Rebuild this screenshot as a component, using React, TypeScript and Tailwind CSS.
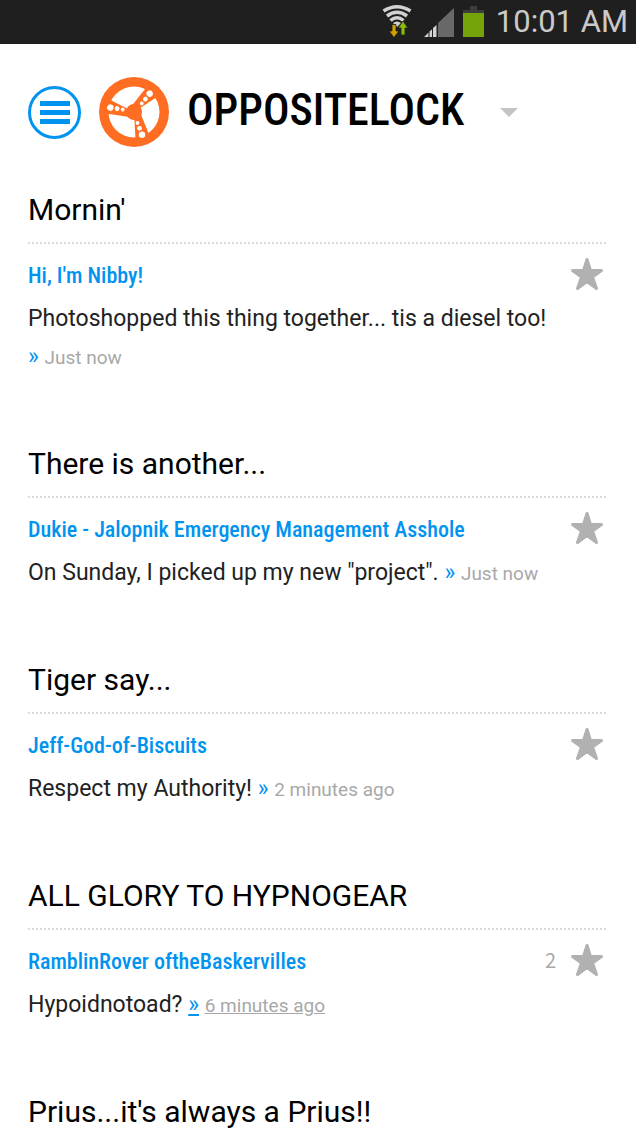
import { Fragment } from 'react';

const posts = [
    { title: "Mornin'", author: "Hi, I'm Nibby!", text: 'Photoshopped this thing together... tis a diesel too!', time: 'Just now', replies: 0, active: false },
    { title: 'There is another...', author: 'Dukie - Jalopnik Emergency Management Asshole', text: 'On Sunday, I picked up my new "project".', time: 'Just now', replies: 0, active: false },
    { title: 'Tiger say...', author: 'Jeff-God-of-Biscuits', text: 'Respect my Authority!', time: '2 minutes ago', replies: 0, active: false },
    { title: 'ALL GLORY TO HYPNOGEAR', author: 'RamblinRover oftheBaskervilles', text: 'Hypoidnotoad?', time: '6 minutes ago', replies: 2, active: true },
    { title: "Prius...it's always a Prius!!", author: '', text: '', time: '', replies: 0, active: false },
];

function StatusBar() {
    return (
        <div className="flex h-11 items-center justify-end bg-[#1f1f1f] pr-2 text-[#cacaca]">
            <svg width="32" height="36" viewBox="0 0 32 36" className="mr-[10px]" fill="none">
                <g stroke="#d2d2d2" strokeWidth="3.5">
                    <path d="M1.500 7Q15 -1.500 28.500 7" />
                    <path d="M5 12Q15 4.600 25 12" />
                    <path d="M8.500 16.500Q15 11 21.500 16.500" />
                </g>
                <path d="M11 19Q15 16 19 19L15 23Z" fill="#d2d2d2" />
                <g stroke="#1f1f1f" strokeWidth="0.8">
                    <path d="M10 20.500H14V27H17L12 33.500L7 27H10Z" fill="#d0a000" />
                    <path d="M21 17L26 24H23V31H19V24H16Z" fill="#86bc08" />
                </g>
            </svg>
            <svg width="30" height="30" viewBox="0 0 30 30" className="mr-[9px]">
                <path d="M30 1V30H14V16Z" fill="#686868" />
                <path d="M9 21L12.500 18V30H9ZM5.500 24.500L8 22.300V30H5.500ZM0 30L4.500 25.500V30Z" fill="#d2d2d2" />
            </svg>
            <svg width="21" height="32" viewBox="0 0 21 32" className="mr-3">
                <path d="M7 0H14V4H21V8H0V4H7Z" fill="#3d3d3d" />
                <path d="M0 7H21V31H0Z" fill="#74a30a" />
            </svg>
            <span className="pb-0.5 text-[31px] leading-none">10:01 AM</span>
        </div>
    );
}

function WheelLogo() {
    return (
        <svg width="70" height="70" viewBox="0 0 70 70" className="shrink-0" role="img" aria-label="Oppositelock">
            <circle cx="35" cy="35" r="35" fill="#ff6d22" />
            <circle cx="35" cy="35" r="25.5" fill="#fff" />
            {[0, 120, 240].map((angle) => (
                <g key={angle} transform={`rotate(${angle} 35 35)`}>
                    <path d="M35 35L36.500 62L51 60L41 35Z" fill="#ff6d22" />
                    <circle cx="38.500" cy="46" r="1.900" fill="#fff" />
                    <circle cx="40.500" cy="51.300" r="2.400" fill="#fff" />
                    <circle cx="43" cy="57.700" r="3.200" fill="#fff" />
                </g>
            ))}
            <circle cx="35" cy="35" r="8" fill="#ff6d22" />
        </svg>
    );
}

function Star() {
    return (
        <svg width="34" height="34" viewBox="0 0 34 34" fill="#b1b1b1" stroke="#b1b1b1" strokeWidth="3" strokeLinejoin="round">
            <path d="M17 2.500L20.500 13.500H31.500L22.500 20L26.500 31.500L17 24.500L7.500 31.500L11.500 20L2.500 13.500H13.500Z" />
        </svg>
    );
}

export default function App() {
    return (
        <div className="h-screen overflow-hidden bg-white font-['Roboto',sans-serif]">
            <StatusBar />
            <header className="flex items-center pt-8 pr-[30px] pl-7">
                <button aria-label="Menu" className="mr-[18px] flex size-[53px] shrink-0 flex-col items-center justify-center gap-1 rounded-full border-3 border-[#0093f0]">
                    <span className="h-[5px] w-[30px] bg-[#0093f0]" />
                    <span className="h-[5px] w-[30px] bg-[#0093f0]" />
                    <span className="h-[5px] w-[30px] bg-[#0093f0]" />
                </button>
                <WheelLogo />
                <h1 className="ml-[18px] pb-1 font-['Roboto_Condensed',sans-serif] text-[44px] leading-[68px] font-medium">OPPOSITELOCK</h1>
                <button aria-label="Choose blog" className="ml-9">
                    <svg width="18" height="9" viewBox="0 0 18 9" fill="#c4c4c4">
                        <path d="M0 0H18L9 9Z" />
                    </svg>
                </button>
            </header>

            <main className="flex flex-col gap-[68px] pt-[42px] pr-[30px] pl-7">
                {posts.map((post) => (
                    <article key={post.title}>
                        <h2 className="border-b-2 border-dotted border-[#dcdcdc] pb-3 text-[30px] leading-10">{post.title}</h2>
                        {post.author && (
                            <Fragment>
                                <div className="flex h-14 items-center justify-between pt-1 pr-0.5">
                                    <a href="#" className="pt-1 font-['Roboto_Condensed',sans-serif] text-[22px] leading-8 font-medium text-[#0093f0]">{post.author}</a>
                                    <div className="flex items-center gap-[14px]">
                                        {post.replies > 0 && <span className="font-['Noto_Sans_CJK_JP',sans-serif] text-xl text-[#a8a8a8]">{post.replies}</span>}
                                        <button aria-label="Star"><Star /></button>
                                    </div>
                                </div>
                                <p className="text-[23px] leading-[38px] text-[#222]">
                                    {post.text}{' '}
                                    <span className="whitespace-nowrap">
                                        <a href="#" className={post.active ? 'text-[#0093f0] underline' : 'text-[#0093f0]'}>»</a>{' '}
                                        <a href="#" className={post.active ? 'text-[19px] leading-6 text-[#a8a8a8] underline' : 'text-[19px] leading-6 text-[#a8a8a8]'}>{post.time}</a>
                                    </span>
                                </p>
                            </Fragment>
                        )}
                    </article>
                ))}
            </main>
        </div>
    );
}
